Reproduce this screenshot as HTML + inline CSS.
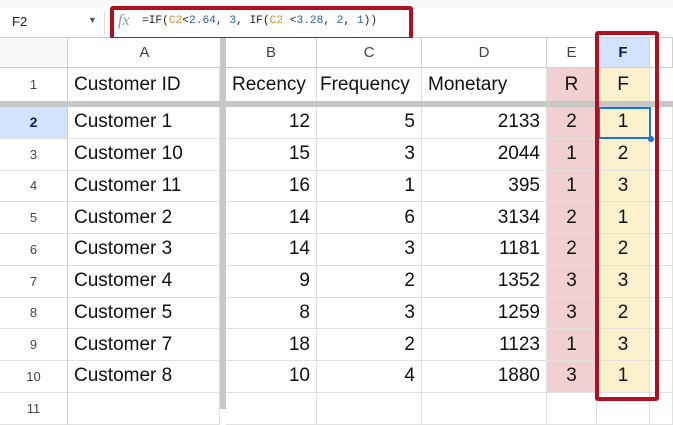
<!DOCTYPE html><html><head><style>
body{margin:0;width:673px;height:409px;overflow:hidden;background:#fff;font-family:"Liberation Sans",Arial,sans-serif;position:relative}
div{position:absolute;box-sizing:border-box}
.c{font-size:19px;color:#111;display:flex;align-items:center;border-right:1px solid #e1e1e1;border-bottom:1px solid #e1e1e1}
.h{font-size:15px;color:#444;justify-content:center;display:flex;align-items:center;border-right:1px solid #d0d0d0;border-bottom:1px solid #d0d0d0;background:#fff}
.r{justify-content:flex-end;padding-right:6px}.m{justify-content:center}.l{padding-left:6px}
.rn{font-size:13px;color:#444;justify-content:center;border-right:1px solid #d0d0d0}
</style></head><body>
<div style="left:0;top:0;width:673px;height:8px;background:#f8f9fa"></div>
<div style="left:0;top:8px;width:673px;height:30px;border-bottom:1px solid #d0d0d0"></div>
<div style="left:12px;top:14px;font-size:13px;color:#222">F2</div>
<div style="left:88px;top:15px;font-size:9px;color:#555">▼</div>
<div style="left:104px;top:12px;width:1px;height:22px;background:#ddd"></div>
<div style="left:118px;top:12px;font-size:16px;color:#999;font-style:italic;font-family:'Liberation Serif',serif">fx</div>
<div style="left:142px;top:15px;font-size:11.2px;font-family:'Liberation Mono',monospace;color:#222;white-space:pre">=IF(<span style="color:#d98b2b">C2</span>&lt;<span style="color:#2a5db0">2.64</span>, <span style="color:#2a5db0">3</span>, IF(<span style="color:#d98b2b">C2</span> &lt;<span style="color:#2a5db0">3.28</span>, <span style="color:#2a5db0">2</span>, <span style="color:#2a5db0">1</span>))</div>
<div style="left:110px;top:6px;width:303px;height:35px;border:4px solid #b0101f;border-radius:3px"></div>

<div class="h" style="left:0;top:38px;width:68px;height:30px;background:#f8f9fa"></div>
<div class="h" style="left:68px;top:38px;width:154px;height:30px">A</div>
<div style="left:220px;top:38px;width:6px;height:371px;background:#c7c7c7"></div>
<div class="h" style="left:226px;top:38px;width:91px;height:30px">B</div>
<div class="h" style="left:317px;top:38px;width:105px;height:30px">C</div>
<div class="h" style="left:422px;top:38px;width:125px;height:30px">D</div>
<div class="h" style="left:547px;top:38px;width:50px;height:30px">E</div>
<div class="h" style="left:597px;top:38px;width:53px;height:30px;background:#d3e3fd;color:#0b1f55;font-weight:bold">F</div>
<div class="h" style="left:650px;top:38px;width:23px;height:30px"></div>

<div class="c rn" style="left:0;top:68px;width:68px;height:34px">1</div>
<div class="c l" style="left:68px;top:68px;width:152px;height:34px">Customer ID</div>
<div class="c l" style="left:226px;top:68px;width:91px;height:34px">Recency</div>
<div class="c l" style="left:317px;top:68px;width:105px;height:34px;padding-left:3px">Frequency</div>
<div class="c l" style="left:422px;top:68px;width:125px;height:34px">Monetary</div>
<div class="c m" style="left:547px;top:68px;width:50px;height:34px;background:#f0d0d0">R</div>
<div class="c m" style="left:597px;top:68px;width:53px;height:34px;background:#fdf0cd">F</div>
<div style="left:0;top:101px;width:673px;height:6px;background:#c7c7c7"></div>

<div id="rows"></div>
<script>
var d=[["2","Customer 1",12,5,2133,2,1],["3","Customer 10",15,3,2044,1,2],["4","Customer 11",16,1,395,1,3],["5","Customer 2",14,6,3134,2,1],["6","Customer 3",14,3,1181,2,2],["7","Customer 4",9,2,1352,3,3],["8","Customer 5",8,3,1259,3,2],["9","Customer 7",18,2,1123,1,3],["10","Customer 8",10,4,1880,3,1],["11","","","","","",""]];
var h="";
d.forEach(function(r,i){var t=107+i*31.75,ht=31.75;var last=i==9;
h+='<div class="c rn" style="left:0;top:'+t+'px;width:68px;height:'+ht+'px;'+(i==0?'background:#d3e3fd;color:#0b1f55;font-weight:bold;font-size:14px':'')+'">'+r[0]+'</div>';
h+='<div class="c l" style="left:68px;top:'+t+'px;width:152px;height:'+ht+'px">'+r[1]+'</div>';
h+='<div class="c r" style="left:226px;top:'+t+'px;width:91px;height:'+ht+'px">'+r[2]+'</div>';
h+='<div class="c r" style="left:317px;top:'+t+'px;width:105px;height:'+ht+'px">'+r[3]+'</div>';
h+='<div class="c r" style="left:422px;top:'+t+'px;width:125px;height:'+ht+'px">'+r[4]+'</div>';
h+='<div class="c m" style="left:547px;top:'+t+'px;width:50px;height:'+ht+'px;'+(last?'':'background:#f0d0d0')+'">'+r[5]+'</div>';
h+='<div class="c m" style="left:597px;top:'+t+'px;width:53px;height:'+ht+'px;'+(last?'':'background:#fdf0cd')+'">'+r[6]+'</div>';
h+='<div class="c" style="left:650px;top:'+t+'px;width:23px;height:'+ht+'px"></div>';});
document.getElementById("rows").outerHTML=h;
</script>
<div style="left:598px;top:107px;width:53px;height:32px;border:2px solid #1a73e8"></div>
<div style="left:648px;top:136px;width:6px;height:6px;background:#1a73e8;border-radius:50%"></div>
<div style="left:595px;top:31px;width:64px;height:370px;border:4px solid #b0101f;border-radius:3px"></div>
</body></html>
